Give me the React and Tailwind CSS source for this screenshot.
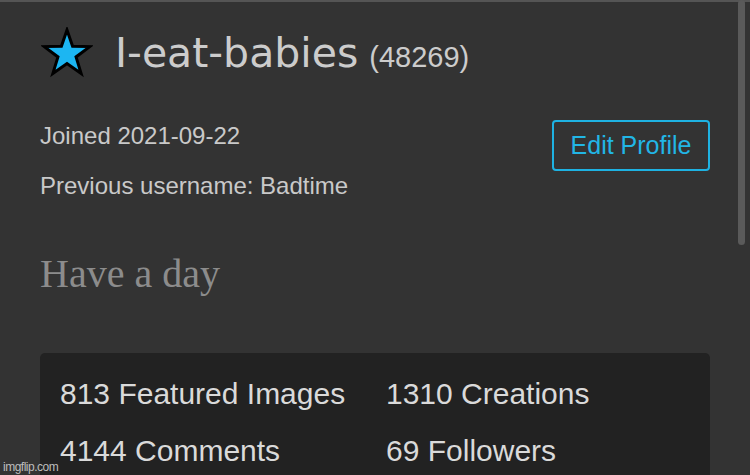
import React from 'react';

const stats = [
  ['813 Featured Images', '1310 Creations'],
  ['4144 Comments', '69 Followers'],
];

function Star() {
  return (
    <svg width="52" height="52" viewBox="0 0 52 52" className="shrink-0">
      <polygon
        points="26,3 31.59,19.31 48.83,19.58 35.04,29.94 40.11,46.42 26,36.5 11.89,46.42 16.96,29.94 3.17,19.58 20.41,19.31"
        fill="#1cb6f2"
        stroke="#000"
        strokeWidth="3"
        strokeLinejoin="miter"
      />
    </svg>
  );
}

export default function App() {
  return (
    <div className="relative w-[750px] h-[475px] overflow-hidden bg-[#333333] font-['Liberation_Sans',Arial,sans-serif]">
      {/* top edge */}
      <div className="h-[2px] bg-[#555555]" />

      <div className="px-[40px]">
        <div className="flex items-center pt-[25px]">
          <div className="ml-[1px]">
            <Star />
          </div>
          <div className="ml-[22px] flex items-baseline text-[#cccccc]">
            <span className="text-[41px] leading-none font-['DejaVu_Sans',Verdana,sans-serif]">I-eat-babies</span>
            <span className="ml-[11px] text-[29px] leading-none">(48269)</span>
          </div>
        </div>

        <div className="mt-[41px] flex justify-between items-start">
          <div className="mt-[1px] flex flex-col gap-5 text-[24px] leading-[30px] text-[#c9c9c9]">
            <div>Joined 2021-09-22</div>
            <div>Previous username: Badtime</div>
          </div>
          <button className="w-[158px] h-[51px] flex items-center justify-center rounded-[4px] border-2 border-[#1eb2e2] text-[25px] text-[#22b6e6]">
            Edit Profile
          </button>
        </div>

        <div className="mt-[53px] text-[40px] leading-none text-[#8c8c8c] font-['Liberation_Serif','Times_New_Roman',serif]">
          Have a day
        </div>

        <div className="mt-[59px] rounded-[5px] bg-[#222222] pl-[20px] pt-[12px] pb-4">
          {stats.map((row) => (
            <div key={row[0]} className="grid grid-cols-[326px_1fr] text-[30px] leading-[57px] text-[#dadada]">
              <div>{row[0]}</div>
              <div>{row[1]}</div>
            </div>
          ))}
        </div>
      </div>

      {/* scrollbar thumb */}
      <div className="absolute right-[5px] top-0 w-[7px] h-[245px] rounded-full bg-[#5a5a5a]" />

      {/* watermark */}
      <div className="absolute left-[3px] bottom-[2px] text-[12px] leading-none tracking-[-0.5px] text-[#bdbdbd]">
        imgflip.com
      </div>
    </div>
  );
}
